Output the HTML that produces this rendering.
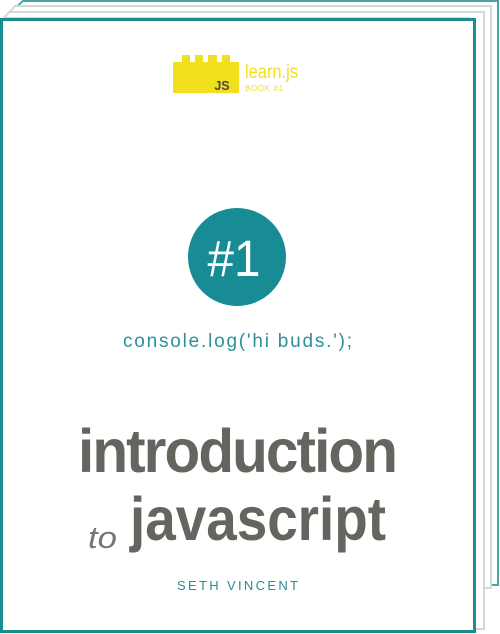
<!DOCTYPE html>
<html><head><meta charset="utf-8"><style>
html,body{margin:0;padding:0;background:#fff;width:500px;height:634px;overflow:hidden}
svg{display:block}
</style></head><body>
<svg width="500" height="634" viewBox="0 0 500 634" xmlns="http://www.w3.org/2000/svg">
<polygon points="23,1 498,1 498,585 470,585 470,18 4,18" fill="#fff" stroke="#4aa3a8" stroke-width="2"/>
<polygon points="15,6 491,6 491,588 470,588 470,18 4,18" fill="#fff" stroke="#d6d6d6" stroke-width="2"/>
<polygon points="9,12 484,12 484,629 470,629 470,18 4,18" fill="#fff" stroke="#d6d6d6" stroke-width="2"/>
<rect x="1.5" y="19.5" width="473" height="612" fill="#fff" stroke="#1a8d93" stroke-width="3"/>
<g fill="#f2e01f">
<rect x="173" y="62" width="66" height="31"/>
<rect x="182" y="55" width="8" height="8"/>
<rect x="195" y="55" width="8" height="8"/>
<rect x="208" y="55" width="9" height="8"/>
<rect x="222" y="55" width="8" height="8"/>
</g>
<text x="222" y="90" font-family="Liberation Sans, sans-serif" font-weight="bold" font-size="12.5" fill="#4a4a42" text-anchor="middle">JS</text>
<text x="245" y="78" font-family="Liberation Sans, sans-serif" font-size="19" fill="#f2e01f" textLength="53" lengthAdjust="spacingAndGlyphs">learn.js</text>
<text x="245" y="91" font-family="Liberation Sans, sans-serif" font-size="8" fill="#f2e01f" textLength="38" lengthAdjust="spacing">BOOK #1</text>
<circle cx="237" cy="257" r="49" fill="#188c94"/>
<text x="234" y="276" font-family="Liberation Sans, sans-serif" font-size="51" fill="#fff" text-anchor="middle" textLength="53" lengthAdjust="spacingAndGlyphs">#1</text>
<text x="123" y="347" font-family="Liberation Sans, sans-serif" font-size="19" fill="#2a9199" textLength="229" lengthAdjust="spacing">console.log('hi buds.');</text>
<text x="78" y="472" font-family="Liberation Sans, sans-serif" font-weight="bold" font-size="61" fill="#65645e" textLength="318" lengthAdjust="spacingAndGlyphs" letter-spacing="-2">introduction</text>
<text x="88" y="548" font-family="Liberation Sans, sans-serif" font-style="italic" font-size="31" fill="#77766f" textLength="29" lengthAdjust="spacingAndGlyphs">to</text>
<text x="130" y="540" font-family="Liberation Sans, sans-serif" font-weight="bold" font-size="61" fill="#65645e" textLength="256" lengthAdjust="spacingAndGlyphs">javascript</text>
<text x="177" y="590" font-family="Liberation Sans, sans-serif" font-size="13" fill="#1f9099" textLength="121" lengthAdjust="spacing">SETH VINCENT</text>
</svg>
</body></html>
